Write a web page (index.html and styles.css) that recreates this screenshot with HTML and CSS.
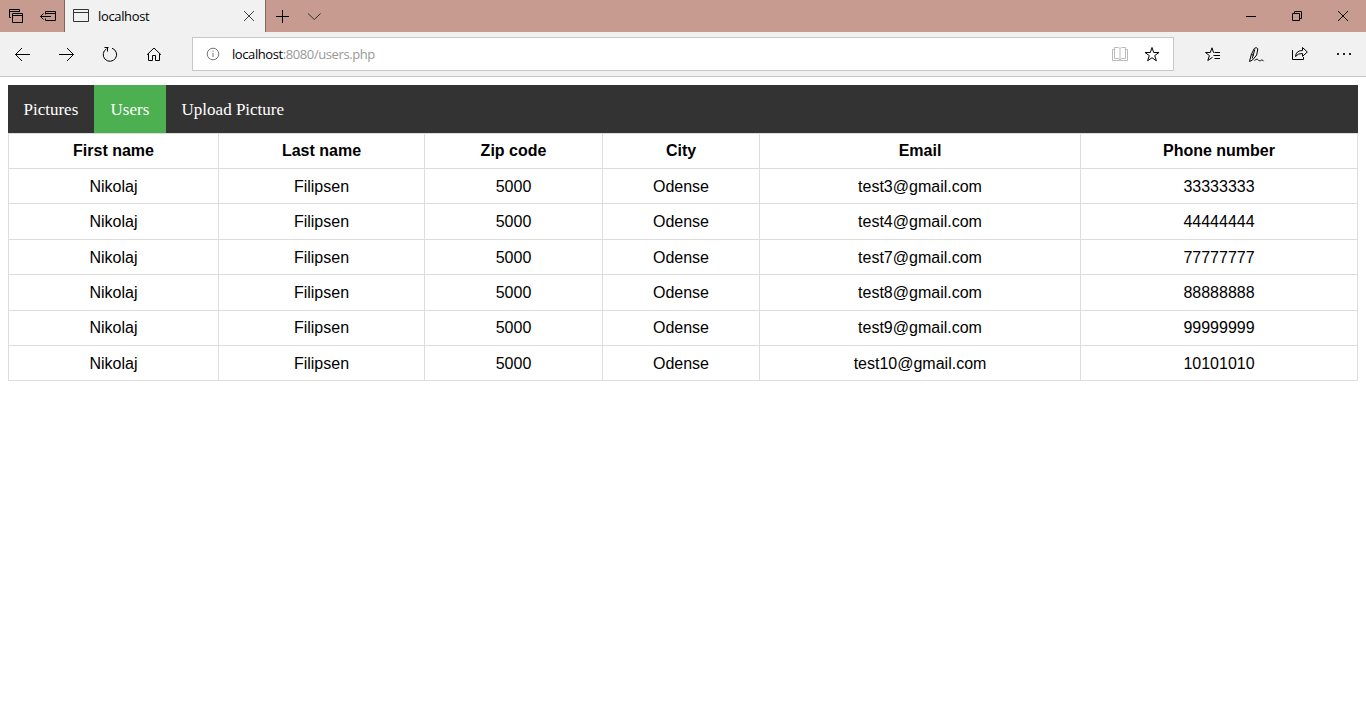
FILE: index.html
```html
<!DOCTYPE html>
<html lang="en">
<head>
<meta charset="utf-8">
<title>localhost</title>
<link rel="stylesheet" href="styles.css">
</head>
<body>
<header class="titlebar">
  <svg class="ico w32" viewBox="0 0 32 32"><path d="M19.500 12V9.500H9.500V17.500H11M9 11.500H20M12.500 13.500H22.500V22.500H12.500ZM12 15.500H23"/></svg>
  <svg class="ico w32" viewBox="0 0 32 32"><path d="M13.500 14.500V11.500H23.500V20.500H13.500V18.500M13 13.500H24M8.500 16.500H19M11.500 13.500L8.500 16.500L11.500 19.500"/></svg>
  <div class="tab">
    <svg class="tab-icon" viewBox="0 0 16 14"><path d="M.5.5H15.500V12.500H.5ZM.5 3.500H15.500"/></svg>
    <span class="tab-title">localhost</span>
    <svg class="tab-close" viewBox="0 0 12 12"><path d="M1 1L11 11M11 1L1 11"/></svg>
  </div>
  <svg class="ico w32" viewBox="0 0 32 32"><path d="M10 16.500H23M16.500 10V23"/></svg>
  <svg class="ico w32 chevron" viewBox="0 0 32 32"><path d="M10 13.500L16.300 19.500L22.600 13.500"/></svg>
  <div class="window-buttons">
    <svg class="ico w46" viewBox="0 0 46 32"><path d="M18 16.500H28"/></svg>
    <svg class="ico w46" viewBox="0 0 46 32"><path d="M18.500 13.500H25.500V20.500H18.500ZM20.500 13V11.500H27.500V18.500H26"/></svg>
    <svg class="ico w46" viewBox="0 0 46 32"><path d="M18 11L28 21M28 11L18 21"/></svg>
  </div>
</header>
<div class="toolbar">
  <svg class="ico w44" viewBox="0 0 44 44"><path d="M30 22.500H15.500M22 16L15.500 22.500L22 29"/></svg>
  <svg class="ico w44" viewBox="0 0 44 44"><path d="M15 22.500H29.500M23 16L29.500 22.500L23 29"/></svg>
  <svg class="ico w44" viewBox="0 0 44 44"><path d="M24 16.200A6.700 6.700 0 1 1 18.500 16.800M16.500 15.500H20.500M19.500 15V19.500"/></svg>
  <svg class="ico w44" viewBox="0 0 44 44"><path d="M15 22.800L22 16L29 22.800M16.500 21.500V28.500H20.500V23.500H23.500V28.500H27.500V21.500"/></svg>
  <div class="address">
    <svg class="info" viewBox="0 0 14 14"><circle cx="7" cy="7" r="5.800"/><path d="M7 6V10M7 3.700V4.900"/></svg>
    <span class="url">localhost<span class="url-path">:8080/users.php</span></span>
    <svg class="ico w32 book" viewBox="0 0 32 32"><path d="M10.500 9.500H14.500L16 10.500L17.500 9.500H21.500V20.500H17.500L16 22L14.500 20.500H10.500ZM16 10.500V23M10 11.500H8.500V22.500H23.500V11.500H22"/></svg>
    <svg class="ico w32" viewBox="0 0 32 32"><path d="M16 9.500L17.700 14.500H23L18.700 17.600L20.400 22.800L16 19.700L11.600 22.800L13.300 17.600L9 14.500H14.300Z"/></svg>
  </div>
  <svg class="ico w44" viewBox="0 0 44 44"><path d="M24.500 20.500H30M23.500 23.500H30M24.500 26.500H30M24 20.500H23.500L22 15.800L20.300 20.500H15.500L19.400 23.600L17.800 28.500L22.500 25.300"/></svg>
  <svg class="ico w44" viewBox="0 0 44 44"><path d="M15.500 29.500L17.300 22.500L20.300 16.500Q22.200 14.500 23.800 16.800L22.700 23L18.500 28L15.500 29.500M17.300 22.500L19.800 23.300M20.800 17.500L18.200 26.500M20.500 28.500C22.500 27 23.500 26.800 24 27.800S26.500 29.300 27.500 28Q28.500 27.500 29.500 29.200"/></svg>
  <svg class="ico w44" viewBox="0 0 44 44"><path d="M14.500 18V27.500H25.500V25M17.500 24.500Q18 18.500 24.500 18.500V15.500L29.300 20L24.500 24.300V21.500Q20 21.200 17.500 24.500Z"/></svg>
  <svg class="ico w44 dots" viewBox="0 0 44 44"><path d="M15 21H17V23H15ZM21 21H23V23H21ZM27 21H29V23H27Z"/></svg>
</div>
<main class="page">
  <nav class="menu">
    <a class="menu-link">Pictures</a>
    <a class="menu-link active">Users</a>
    <a class="menu-link">Upload Picture</a>
  </nav>
  <table class="users">
    <colgroup><col class="c-first"><col class="c-last"><col class="c-zip"><col class="c-city"><col class="c-email"><col class="c-phone"></colgroup>
    <tr><th>First name</th><th>Last name</th><th>Zip code</th><th>City</th><th>Email</th><th>Phone number</th></tr>
    <tr class="low"><td>Nikolaj</td><td>Filipsen</td><td>5000</td><td>Odense</td><td>test3@gmail.com</td><td>33333333</td></tr>
    <tr class="tall"><td>Nikolaj</td><td>Filipsen</td><td>5000</td><td>Odense</td><td>test4@gmail.com</td><td>44444444</td></tr>
    <tr class="low"><td>Nikolaj</td><td>Filipsen</td><td>5000</td><td>Odense</td><td>test7@gmail.com</td><td>77777777</td></tr>
    <tr class="tall"><td>Nikolaj</td><td>Filipsen</td><td>5000</td><td>Odense</td><td>test8@gmail.com</td><td>88888888</td></tr>
    <tr><td>Nikolaj</td><td>Filipsen</td><td>5000</td><td>Odense</td><td>test9@gmail.com</td><td>99999999</td></tr>
    <tr class="low"><td>Nikolaj</td><td>Filipsen</td><td>5000</td><td>Odense</td><td>test10@gmail.com</td><td>10101010</td></tr>
  </table>
</main>
</body>
</html>
```
FILE: styles.css
```css
* { box-sizing: border-box; }
body { margin: 0; background: #fff; overflow: hidden; }
svg { display: block; flex: none; fill: none; stroke: #000; stroke-width: 1; }
.w32 { width: 32px; height: 32px; }
.w44 { width: 44px; height: 44px; }
.w46 { width: 46px; height: 32px; }
.titlebar { display: flex; height: 32px; background: #c79b8f; }
.tab {
  display: flex; align-items: center; width: 202px; height: 32px; padding: 0 10px 0 8px;
  background: #f1f1f1; border-left: 1px solid #806560; border-right: 1px solid #806560;
  font: 13px/18px "Open Sans", sans-serif;
}
.tab-icon { width: 16px; height: 14px; stroke: #333; }
.tab-title { flex: 1; margin-left: 9px; letter-spacing: -0.35px; }
.tab-close { width: 12px; height: 12px; stroke: #444; }
.chevron { stroke: #333; }
.window-buttons { display: flex; margin-left: auto; }
.toolbar { display: flex; height: 45px; background: #f1f1f1; border-bottom: 1px solid #c8c8c8; }
.address {
  display: flex; align-items: center; width: 982px; height: 34px; margin: 5px 16px 0;
  padding-left: 13px; background: #fff; border: 1px solid #c8c8c8;
  font: 13px/18px "Open Sans", sans-serif;
}
.address .w32:last-child { margin-right: 5px; }
.info { width: 14px; height: 14px; stroke: #777; }
.url { flex: 1; margin-left: 12px; letter-spacing: -0.41px; }
.url-path { color: #999; }
.book { stroke: #bbb; }
.dots { fill: #222; stroke: none; }
.page { padding: 8px 8px 0; }
.menu { display: flex; height: 48px; background: #333; }
.menu-link {
  padding: 15px 15.5px 0; color: #fff;
  font: 17px/19px "Liberation Serif", serif;
}
.menu-link.active { padding: 15px 16.8px 0; background: #4caf50; }
.users {
  width: 1350px; table-layout: fixed; border-spacing: 0;
  border-top: 1px solid #ddd; border-left: 1px solid #ddd;
  font: 16px/18px "Liberation Sans", sans-serif; text-align: center;
}
.users th, .users td { height: 35px; padding: 0; border-right: 1px solid #ddd; border-bottom: 1px solid #ddd; }
.users .tall td { height: 36px; }
.users .low td { padding-top: 2px; }
.c-first { width: 210px; }
.c-last { width: 206px; }
.c-zip { width: 178px; }
.c-city { width: 157px; }
.c-email { width: 321px; }
.c-phone { width: 277px; }
```
